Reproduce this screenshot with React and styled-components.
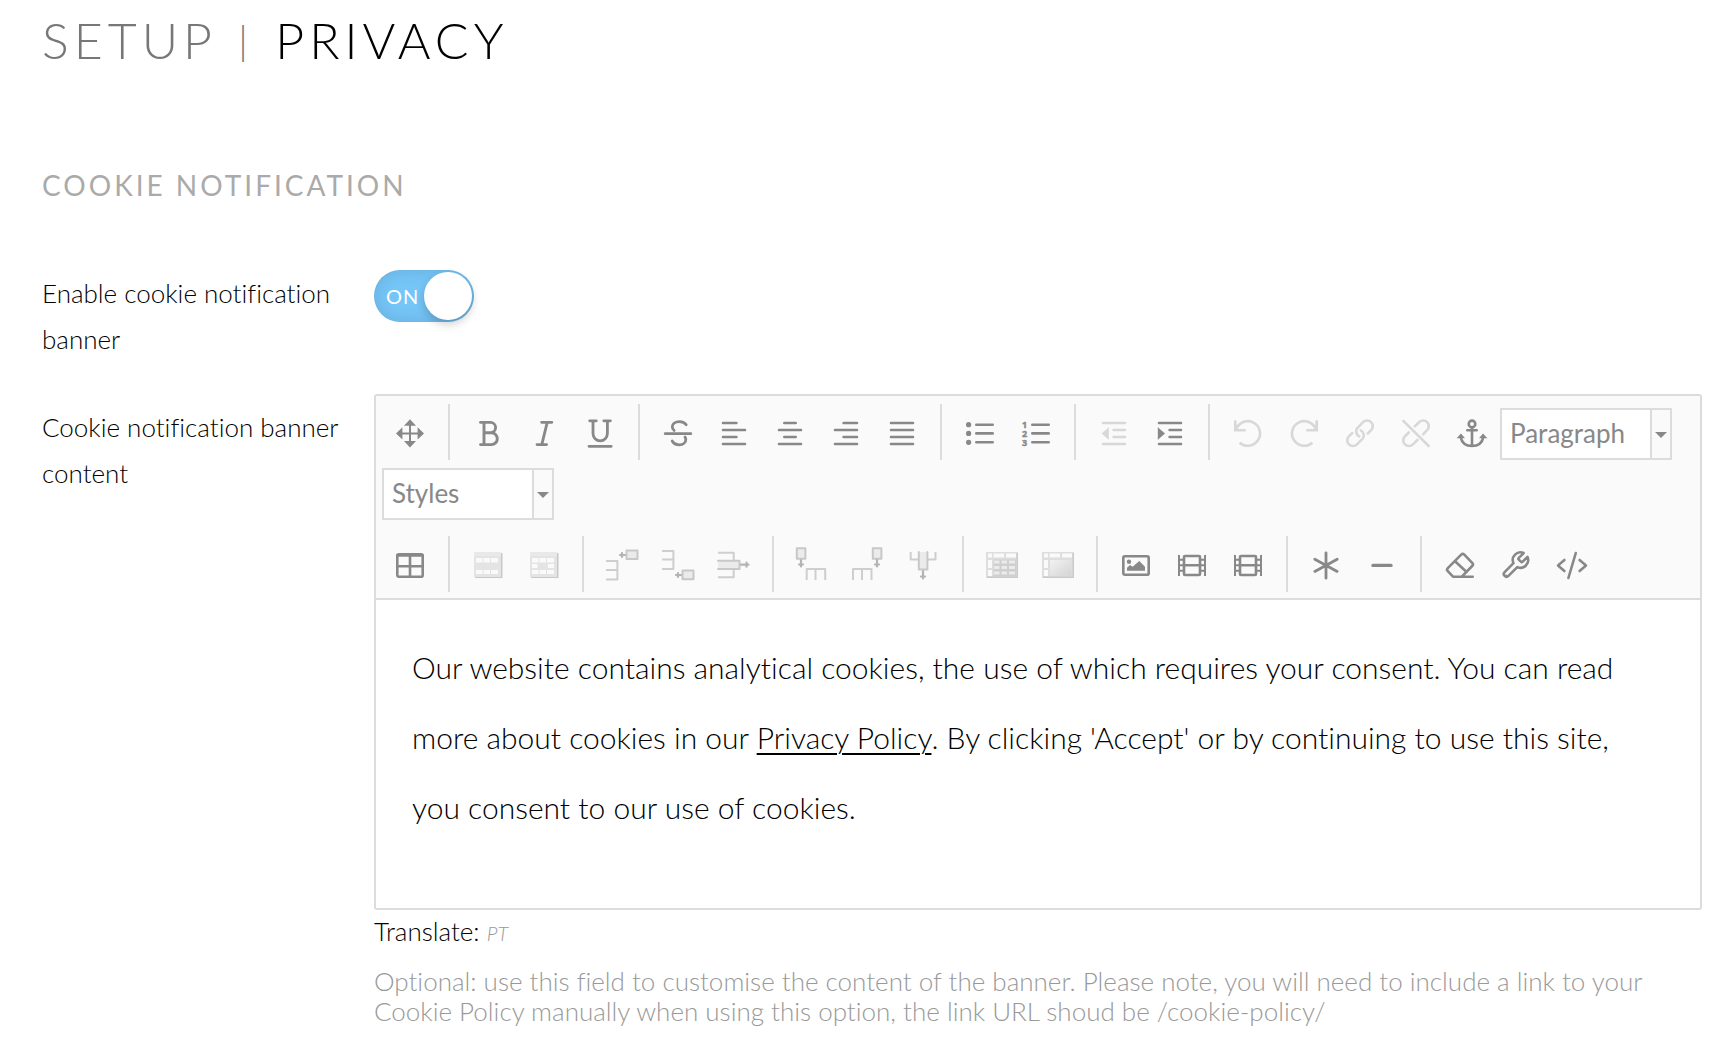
import React, { useState } from 'react'
import styled, { createGlobalStyle } from 'styled-components'

const sans = `Lato, 'Open Sans', sans-serif`
const line = '#dcdcdc'

const GlobalStyle = createGlobalStyle`
  *,
  *::before,
  *::after {
    box-sizing: border-box;
  }

  body {
    margin: 0;
    background: #fff;
    color: #000;
    font-family: ${sans};
    font-weight: 300;
    font-size: 26px;
    font-variant-ligatures: none;
  }
`

const Page = styled.main`
  padding: 8px 16px 20px 42px;
`

const Title = styled.h1`
  margin: 0;
  font-weight: 300;
  font-size: 50px;
  line-height: 64px;
  letter-spacing: 5px;
  text-transform: uppercase;
`

const TitleSection = styled.span`
  color: #777;
`

const TitleDivider = styled.span`
  margin: 0 4px;
  color: #777;
  font-size: 40px;
  line-height: 1;
  vertical-align: 4px;
`

const SectionHeading = styled.h2`
  margin: 88px 0 50px;
  font-weight: 400;
  font-size: 28px;
  line-height: 50px;
  letter-spacing: 3px;
  text-transform: uppercase;
  color: #aaa;
`

const Row = styled.div`
  display: grid;
  grid-template-columns: 300px minmax(0, 1fr);
  column-gap: 32px;
  margin-bottom: 32px;
`

const Label = styled.label`
  padding-top: 10px;
  line-height: 46px;
`

const Switch = styled.label`
  position: relative;
  display: flex;
  align-items: center;
  width: 100px;
  height: 52px;
  margin-top: 10px;
  padding: 2px 12px;
  border-radius: 26px;
  background: ${({ $on }) => ($on ? `#75c5f7` : `#ccc`)};
  box-shadow: inset 0 0 16px rgba(0, 0, 0, 0.12);
  justify-content: ${({ $on }) => ($on ? `flex-start` : `flex-end`)};
  color: #fff;
  font-weight: 400;
  font-size: 20px;
  letter-spacing: 1px;
  cursor: pointer;

  input {
    position: absolute;
    inset: 0;
    margin: 0;
    opacity: 0;
  }

  &::after {
    content: '';
    position: absolute;
    top: 2px;
    ${({ $on }) => ($on ? `right` : `left`)}: 2px;
    width: 48px;
    height: 48px;
    border-radius: 50%;
    background: #fff;
    box-shadow: 0 4px 10px rgba(0, 0, 0, 0.2);
  }
`

const Editor = styled.div`
  border: 2px solid ${line};
  border-radius: 3px;
`

const Toolbar = styled.div`
  padding: 8px 6px 6px;
  border-bottom: 2px solid ${line};
  background: #fafafa;
`

const ToolRow = styled.div`
  display: flex;
  flex-wrap: wrap;
  align-items: flex-end;
  row-gap: 8px;

  & + & {
    margin-top: 16px;
  }
`

const Group = styled.div`
  display: flex;

  & + & {
    margin-left: 10px;
    padding-left: 10px;
    border-left: 2px solid ${line};
  }
`

const ToolButton = styled.button`
  display: flex;
  align-items: center;
  justify-content: center;
  width: 56px;
  height: 56px;
  padding: 0;
  border: 0;
  background: none;
  color: #888;
  cursor: pointer;

  &:disabled {
    color: #d8d8d8;
    cursor: default;
  }
`

const Glyph = styled.svg`
  display: block;
  width: 32px;
  height: 32px;
  overflow: visible;
  fill: none;
  stroke: currentColor;
  stroke-width: 2.6;
  stroke-linecap: round;
  stroke-linejoin: round;
`

const Picker = styled.div`
  position: relative;
  width: 172px;
  height: 52px;
  border: 2px solid ${line};
  color: #888;

  select {
    width: 100%;
    height: 100%;
    padding: 0 26px 2px 8px;
    border: 0;
    border-radius: 0;
    appearance: none;
    background: #fff;
    color: inherit;
    font: inherit;
    font-weight: 400;
  }
`

const PickerArrow = styled.span`
  position: absolute;
  top: 0;
  right: 0;
  bottom: 0;
  display: flex;
  align-items: center;
  justify-content: center;
  width: 20px;
  border-left: 2px solid ${line};
  background: #fafafa;
  pointer-events: none;

  &::after {
    content: '';
    margin-top: 2px;
    border: 6px solid transparent;
    border-top-color: #888;
    border-bottom: 0;
  }
`

const Body = styled.div`
  min-height: 308px;
  padding: 32px 36px;
  font-size: 30px;
  line-height: 70px;
  outline: 0;

  p {
    margin: 0;
  }

  a {
    color: inherit;
    text-decoration-thickness: 2px;
    text-underline-offset: 4px;
  }
`

const Translate = styled.div`
  margin-top: 2px;
  line-height: 38px;

  a {
    color: #999;
    font-size: 20px;
    font-style: italic;
    text-decoration: none;
  }
`

const Help = styled.p`
  margin: 14px 0 0;
  color: #999;
  line-height: 30px;
`

const fill = { fill: 'currentColor', stroke: 'none' }

const filmStrip = (
  <>
    <path
      strokeWidth="2"
      strokeLinecap="butt"
      d="M3 7v21M29 7v21M3 11.8h5M3 17.3h5M3 22.8h5M24 11.8h5M24 17.3h5M24 22.8h5"
    />
    <rect x="8" y="8" width="16" height="19" rx="1" />
    <path d="M8 17.3h16" />
  </>
)

const tableFrame = (
  <g stroke="none">
    <rect x="3" y="5" width="27.5" height="25" fill="#c8c8c8" />
    <rect x="2" y="4" width="27" height="25" fill="#e4e4e4" />
    <rect x="2" y="4" width="27" height="4" fill="#e9e9e9" />
  </g>
)

const gridFrame = (
  <g stroke="none">
    <rect x="0" y="4" width="32" height="26" fill="#dedede" />
    <path fill="#cacaca" d="M30.5 5H32v25H1v-1.5h29.5z" />
    <path
      fill="#fafafa"
      d="M2 5.5h4v4H2zM7.5 5.5H18v4H7.5zM20 5.5h10v4H20zM2 12h4v8H2zM2 22h4v6H2z"
    />
  </g>
)

const cell = { fill: '#ebebeb', stroke: '#c8c8c8', strokeWidth: 2 }
const soft = { stroke: '#cecece', strokeWidth: 2, strokeLinecap: 'butt' }
const arrow = { stroke: '#b4b4b4', strokeWidth: 2.2 }

const icons = {
  move: (
    <>
      <path strokeWidth="2" d="M16 6v23M4.5 17.4h23" />
      <path
        {...fill}
        d="M16 3.3l6 6.5H10zM16 31.4l6-6.5H10zM2 17.4l6.4-6.2v12.4zM30 17.4l-6.4-6.2v12.4z"
      />
    </>
  ),
  bold: (
    <path
      strokeWidth="2.9"
      d="M8.5 6.4h9.9a5.2 5.2 0 0 1 0 10.4H12M18.4 16.8h1a5.9 5.9 0 0 1 0 11.8H8.5M12 6.4v22.2"
    />
  ),
  italic: <path strokeWidth="2.8" d="M13.6 6.3h10.3M9 28.6h9.6M19.2 6.3l-5.4 22.3" />,
  underline: (
    <path
      strokeWidth="2.8"
      d="M5.7 4.8h6.6M19.8 4.8h6.6M9 4.8v12.8a7.2 7.2 0 0 0 14.4 0V4.8M5 30.3h22.2"
    />
  ),
  strike: (
    <path
      strokeWidth="2.8"
      d="M3.2 17.7h25.6M24.2 8.8c-1.5-2.4-3.8-3.2-6.7-3.2-4.4 0-7.2 2.2-7.2 5.2 0 1.5.6 2.7 1.8 3.6M10.2 25c1.4 2.6 3.8 3.8 7 3.8 4.2 0 6.6-2.3 6.6-5.4 0-.9-.3-1.6-.8-2.3"
    />
  ),
  left: <path d="M5 7h13.4M5 14h22M5 21h13.4M5 28h22" />,
  center: <path d="M10.3 7h11.4M5 14h22M10.3 21h11.4M5 28h22" />,
  right: <path d="M13.6 7H27M5 14h22M13.6 21H27M5 28h22" />,
  justify: <path d="M5 7h22M5 14h22M5 21h22M5 28h22" />,
  bullets: (
    <>
      <path d="M12.3 8.7h16.4M12.3 17.4h16.4M12.3 26.3h16.4" />
      <g {...fill}>
        <circle cx="4.6" cy="8.7" r="2.6" />
        <circle cx="4.6" cy="17.4" r="2.6" />
        <circle cx="4.6" cy="26.3" r="2.6" />
      </g>
    </>
  ),
  numbers: (
    <>
      <path d="M12.3 8.7h16.4M12.3 17.4h16.4M12.3 26.3h16.4" />
      <g
        fill="currentColor"
        strokeWidth=".4"
        fontFamily="Noto Sans"
        fontWeight="700"
        fontSize="9"
      >
        <text x="2" y="12">1</text>
        <text x="2" y="21">2</text>
        <text x="2" y="30">3</text>
      </g>
    </>
  ),
  outdent: (
    <>
      <path d="M5 7h22M15.6 14H27M15.6 21H27M5 28h22" />
      <path {...fill} d="M10.8 11.3v12.5L3.6 17.5z" />
    </>
  ),
  indent: (
    <>
      <path d="M5 7h22M15.6 14H27M15.6 21H27M5 28h22" />
      <path {...fill} d="M3.8 11.3v12.5l7.2-6.3z" />
    </>
  ),
  undo: (
    <path
      strokeLinecap="butt"
      strokeLinejoin="miter"
      d="M3.3 4.3v10h10.5M4 13.8A12.3 12.3 0 1 1 7.6 26.7"
    />
  ),
  redo: (
    <path
      strokeLinecap="butt"
      strokeLinejoin="miter"
      d="M28.7 4.3v10H18.2M28 13.8a12.3 12.3 0 1 0-3.6 12.9"
    />
  ),
  link: (
    <>
      <path d="M23.8 17.5l3.3-3.3a5.6 5.6 0 0 0-8-8L13 12.3a5.6 5.6 0 0 0 2.3 8" />
      <path d="M8.2 17.1l-3.3 3.3a5.6 5.6 0 0 0 8 8l6.1-6.1a5.6 5.6 0 0 0-2.3-8" />
    </>
  ),
  unlink: (
    <>
      <path d="M3.3 4.8L28.7 30" />
      <path d="M14.7 10.4l4.4-4.2a5.6 5.6 0 0 1 8 8l-4 4.1" />
      <path d="M8.8 16.5l-3.9 3.9a5.6 5.6 0 0 0 8 8l4.5-4.4" />
    </>
  ),
  anchor: (
    <>
      <circle cx="16" cy="7.9" r="3.3" />
      <path d="M16 11.2V30M11.3 14.3h9.4M4.6 21c1.2 6 5.6 9 11.4 9s10.2-3 11.4-9" />
      <path {...fill} d="M.6 22.2L5 17.5l4 4.7zM31.4 22.2L27 17.5l-4 4.7z" />
    </>
  ),
  table: (
    <>
      <rect x="3.3" y="6.3" width="25.4" height="22.4" rx="1.5" />
      <path d="M3.3 7.5h25.4M3.3 18.3h25.4M16 7v21.5" />
    </>
  ),
  rowProps: (
    <>
      {tableFrame}
      <path
        fill="#fafafa"
        stroke="none"
        d="M4 10h6.5v4.5H4zM11.5 10H18v4.5h-6.5zM19 10h7v4.5h-7zM4 22h6.5v4H4zM11.5 22H18v4h-6.5zM19 22h7v4h-7z"
      />
    </>
  ),
  cellProps: (
    <>
      {tableFrame}
      <path
        fill="#fafafa"
        stroke="none"
        d="M4 10h6.5v4.5H4zM11.5 10H18v4.5h-6.5zM19 10h7v4.5h-7zM4 16h5.5v4H4zM20 16h6v4h-6zM4 22h6.5v4H4zM11.5 22H18v4h-6.5zM19 22h7v4h-7z"
      />
    </>
  ),
  rowBefore: (
    <>
      <path {...soft} d="M0 13h11.4v18.5H0M0 22h11.4" />
      <path {...arrow} d="M14 7h6M16 5v4" />
      <rect {...cell} x="20.5" y="2.5" width="11" height="8.6" />
    </>
  ),
  rowAfter: (
    <>
      <path {...soft} d="M0 3h11.4v18H0M0 11.5h11.4" />
      <path {...arrow} d="M14 27h6M16 25v4" />
      <rect {...cell} x="20.5" y="22.6" width="11" height="8.6" />
    </>
  ),
  rowDelete: (
    <>
      <path {...soft} d="M0 4.7h15.7v24.6H0" />
      <path {...cell} d="M0 12.8h21.5v8.2H0" />
      <path {...arrow} d="M23 16.7h7.5M28.5 14.7v4" />
    </>
  ),
  colBefore: (
    <>
      <rect {...cell} x=".8" y=".3" width="8.6" height="10.5" />
      <path {...arrow} d="M5 12v6.5M3 16.5h4" />
      <path {...soft} d="M10.7 32V21h18.5v11M19.5 21v11" />
    </>
  ),
  colAfter: (
    <>
      <rect {...cell} x="20.8" y=".3" width="8.6" height="10.5" />
      <path {...arrow} d="M25 12v6.5M23 16.5h4" />
      <path {...soft} d="M1 32V21h18.5v11M10 21v11" />
    </>
  ),
  colDelete: (
    <>
      <path {...soft} d="M2.7 4v7.4h24.8V4" />
      <path {...cell} d="M10.8 4v17.5h8.6V4" />
      <path {...arrow} d="M15 23v7.5M13 28.5h4" />
    </>
  ),
  split: (
    <>
      {gridFrame}
      <path fill="#cfcfcf" stroke="none" d="M7.5 11.5H30v17H7.5z" />
      <path
        fill="#ebebeb"
        stroke="none"
        d="M8 12.5h5.5v3H8zM15.5 12.5H21v3h-5.5zM23 12.5h6v3h-6zM8 18h5.5v3H8zM15.5 18H21v3h-5.5zM23 18h6v3h-6zM8 23.5h5.5v3H8zM15.5 23.5H21v3h-5.5zM23 23.5h6v3h-6z"
      />
    </>
  ),
  merge: (
    <>
      <defs>
        <linearGradient id="merged" x1="0" y1="0" x2="1" y2="1">
          <stop offset="0" stopColor="#f2f2f2" />
          <stop offset="1" stopColor="#d4d4d4" />
        </linearGradient>
      </defs>
      {gridFrame}
      <rect x="8" y="12" width="21.5" height="15.5" fill="url(#merged)" stroke="none" />
    </>
  ),
  image: (
    <>
      <rect x="3.3" y="8.3" width="25.4" height="18.4" rx="1.5" />
      <circle {...fill} cx="9" cy="13.7" r="2.2" />
      <path {...fill} d="M7 22.8v-3L10 17l2.7 1.8 6.6-5.8 5.7 5.8v4z" />
    </>
  ),
  film: filmStrip,
  asterisk: (
    <path
      strokeWidth="2.8"
      d="M16 4.8v25.4M4.8 11.2l22.4 12.2M27.2 11.2L4.8 23.4"
    />
  ),
  rule: <path strokeWidth="3.4" d="M7 17.4h18" />,
  eraser: (
    <path d="M28.7 28.7H9l-5.2-5.5a2.2 2.2 0 0 1 0-3.1L17.2 6.7a2.2 2.2 0 0 1 3.1 0l7.9 8.2a2.2 2.2 0 0 1 0 3.1L17.8 28.7M11 13.3L22.6 24" />
  ),
  wrench: (
    <>
      <g transform="translate(0 1.8) scale(1.28)">
        <path
          strokeWidth="2"
          d="M14.7 6.3a1 1 0 0 0 0 1.4l1.6 1.6a1 1 0 0 0 1.4 0l3.77-3.77a6 6 0 0 1-7.94 7.94l-6.91 6.91a2.12 2.12 0 0 1-3-3l6.91-6.91a6 6 0 0 1 7.94-7.94l-3.76 3.76z"
        />
      </g>
      <circle {...fill} cx="6.3" cy="27.2" r=".8" />
    </>
  ),
  code: <path d="M8.4 12L2 17.4l6.4 5.6M23.6 12l6.4 5.4-6.4 5.6M19.8 5l-7.4 25" />,
}

const topGroups = [
  [{ icon: 'move', label: 'Fullscreen' }],
  [
    { icon: 'bold', label: 'Bold' },
    { icon: 'italic', label: 'Italic' },
    { icon: 'underline', label: 'Underline' },
  ],
  [
    { icon: 'strike', label: 'Strikethrough' },
    { icon: 'left', label: 'Align left' },
    { icon: 'center', label: 'Align center' },
    { icon: 'right', label: 'Align right' },
    { icon: 'justify', label: 'Align full' },
  ],
  [
    { icon: 'bullets', label: 'Unordered list' },
    { icon: 'numbers', label: 'Ordered list' },
  ],
  [
    { icon: 'outdent', label: 'Outdent', disabled: true },
    { icon: 'indent', label: 'Indent' },
  ],
  [
    { icon: 'undo', label: 'Undo', disabled: true },
    { icon: 'redo', label: 'Redo', disabled: true },
    { icon: 'link', label: 'Insert link', disabled: true },
    { icon: 'unlink', label: 'Unlink', disabled: true },
    { icon: 'anchor', label: 'Insert anchor' },
  ],
]

const bottomGroups = [
  [{ icon: 'table', label: 'Insert table' }],
  [
    { icon: 'rowProps', label: 'Table row properties', disabled: true },
    { icon: 'cellProps', label: 'Table cell properties', disabled: true },
  ],
  [
    { icon: 'rowBefore', label: 'Insert row before', disabled: true },
    { icon: 'rowAfter', label: 'Insert row after', disabled: true },
    { icon: 'rowDelete', label: 'Delete row', disabled: true },
  ],
  [
    { icon: 'colBefore', label: 'Insert column before', disabled: true },
    { icon: 'colAfter', label: 'Insert column after', disabled: true },
    { icon: 'colDelete', label: 'Delete column', disabled: true },
  ],
  [
    { icon: 'split', label: 'Split merged cells', disabled: true },
    { icon: 'merge', label: 'Merge cells', disabled: true },
  ],
  [
    { icon: 'image', label: 'Insert image' },
    { icon: 'film', label: 'Insert video' },
    { icon: 'film', label: 'Insert media' },
  ],
  [
    { icon: 'asterisk', label: 'Special character' },
    { icon: 'rule', label: 'Horizontal rule' },
  ],
  [
    { icon: 'eraser', label: 'Remove formatting' },
    { icon: 'wrench', label: 'Cleanup' },
    { icon: 'code', label: 'Edit HTML' },
  ],
]

const ToolGroups = ({ groups }) =>
  groups.map(group => (
    <Group key={group[0].label}>
      {group.map(({ icon, label, disabled }) => (
        <ToolButton
          key={label}
          type="button"
          title={label}
          aria-label={label}
          disabled={disabled}
        >
          <Glyph viewBox="0 0 32 32" aria-hidden="true">
            {icons[icon]}
          </Glyph>
        </ToolButton>
      ))}
    </Group>
  ))

const ToolPicker = ({ label, options }) => (
  <Picker>
    <select aria-label={label}>
      {options.map(option => (
        <option key={option}>{option}</option>
      ))}
    </select>
    <PickerArrow />
  </Picker>
)

const App = () => {
  const [enabled, setEnabled] = useState(true)

  return (
    <>
      <GlobalStyle />
      <Page>
        <Title>
          <TitleSection>Setup</TitleSection> <TitleDivider>|</TitleDivider>{' '}
          Privacy
        </Title>
        <SectionHeading>Cookie notification</SectionHeading>

        <Row>
          <Label htmlFor="enable-banner">Enable cookie notification banner</Label>
          <Switch $on={enabled}>
            <input
              id="enable-banner"
              type="checkbox"
              checked={enabled}
              onChange={e => setEnabled(e.target.checked)}
            />
            {enabled ? 'ON' : 'OFF'}
          </Switch>
        </Row>

        <Row>
          <Label as="div" id="banner-content">
            Cookie notification banner content
          </Label>
          <div>
            <Editor>
              <Toolbar role="toolbar" aria-label="Formatting">
                <ToolRow>
                  <ToolGroups groups={topGroups} />
                  <ToolPicker
                    label="Block format"
                    options={['Paragraph', 'Heading 1', 'Heading 2']}
                  />
                  <ToolPicker label="Styles" options={['Styles']} />
                </ToolRow>
                <ToolRow>
                  <ToolGroups groups={bottomGroups} />
                </ToolRow>
              </Toolbar>
              <Body
                contentEditable
                suppressContentEditableWarning
                spellCheck={false}
                role="textbox"
                aria-multiline="true"
                aria-labelledby="banner-content"
              >
                <p>
                  Our website contains analytical cookies, the use of which
                  requires your consent. You can read more about cookies in our{' '}
                  <a href="/cookie-policy/">Privacy Policy</a>. By clicking
                  'Accept' or by continuing to use this site, you consent to our
                  use of cookies.
                </p>
              </Body>
            </Editor>
            <Translate>
              Translate: <a href="#pt">PT</a>
            </Translate>
            <Help>
              Optional: use this field to customise the content of the banner.
              Please note, you will need to include a link to your Cookie Policy
              manually when using this option, the link URL shoud be
              /cookie-policy/
            </Help>
          </div>
        </Row>
      </Page>
    </>
  )
}

export default App
